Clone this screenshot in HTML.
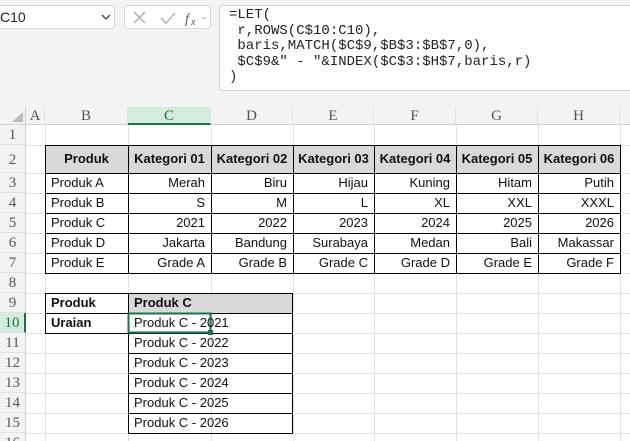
<!DOCTYPE html>
<html style="height:441px;overflow:hidden"><head><style>
*{margin:0;padding:0;box-sizing:border-box}
body{width:630px;height:441px;background:#f3f3f3;position:relative;overflow:hidden;font-family:"Liberation Sans",sans-serif}
.abs{position:absolute}
.box{position:absolute;background:#fff;border:1px solid #d6d6d6;border-radius:4px}
.mono{font-family:"Liberation Mono",monospace;font-size:14px;line-height:15.5px;color:#222}
.grid{position:absolute;left:0;top:107px;width:630px;height:334px;background:#fff}
.ch{position:absolute;top:107px;height:18px;background:#f3f3f3;border-right:1px solid #e1e1e1;border-bottom:1px solid #d0d0d0;text-align:center;font-family:"Liberation Serif",serif;font-size:15px;color:#555;line-height:18px}
.rh{position:absolute;left:0;width:26px;background:#f3f3f3;border-right:1px solid #d0d0d0;border-bottom:1px solid #e1e1e1;text-align:center;font-family:"Liberation Serif",serif;font-size:15px;color:#555}
.c{position:absolute;font-size:13px;color:#111;padding:0 6px;white-space:nowrap;overflow:visible}
.vl{position:absolute;top:125px;width:1px;height:316px;background:#e1e1e1}
.hl{position:absolute;left:26px;height:1px;width:604px;background:#e1e1e1}
</style></head><body>
<div class="box" style="left:-5px;top:5px;width:120px;height:24px"></div>
<div class="abs" style="left:0;top:9px;font-size:14px;color:#222">C10</div>
<svg class="abs" style="left:101px;top:13px" width="10" height="8"><path d="M1 2 L5 6 L9 2" fill="none" stroke="#444" stroke-width="1.3"/></svg>
<div class="box" style="left:124px;top:5px;width:87px;height:24px"></div>
<svg class="abs" style="left:132px;top:10px" width="80" height="16"><path d="M2 2 L13 13 M13 2 L2 13" stroke="#aaa" stroke-width="1.3"/><path d="M29 8 L34 13 L43 3" fill="none" stroke="#aaa" stroke-width="1.3"/><text x="53" y="13" font-family="Liberation Serif" font-style="italic" font-size="14" fill="#555">f</text><text x="59" y="15" font-family="Liberation Serif" font-style="italic" font-size="10" fill="#555">x</text><path d="M70 7 L72 9 L74 7" fill="none" stroke="#bbb"/></svg>
<div class="box" style="left:219px;top:5px;width:420px;height:86px"></div>
<div class="abs mono" style="left:229px;top:8px;white-space:pre">=LET(
 r,ROWS(C$10:C10),
 baris,MATCH($C$9,$B$3:$B$7,0),
 $C$9&amp;" - "&amp;INDEX($C$3:$H$7,baris,r)
)</div>
<div class="grid"></div>
<div class="abs" style="left:0;top:107px;width:26px;height:18px;background:#f3f3f3;border-right:1px solid #d0d0d0;border-bottom:1px solid #d0d0d0"></div>
<svg class="abs" style="left:10px;top:111px" width="14" height="12"><path d="M13 1 L13 11 L2 11Z" fill="#bbb"/></svg>
<div class="ch" style="left:26px;width:19px">A</div>
<div class="ch" style="left:45px;width:83px">B</div>
<div class="ch" style="left:128px;width:83px;background:#d3ecdd;border-bottom:2px solid #1e7145;color:#1e7145">C</div>
<div class="ch" style="left:211px;width:82px">D</div>
<div class="ch" style="left:293px;width:81px">E</div>
<div class="ch" style="left:374px;width:82px">F</div>
<div class="ch" style="left:456px;width:82px">G</div>
<div class="ch" style="left:538px;width:82px">H</div>
<div class="ch" style="left:620px;width:10px;border-right:none"></div>
<div class="vl" style="left:45px"></div><div class="vl" style="left:128px"></div><div class="vl" style="left:211px"></div><div class="vl" style="left:293px"></div><div class="vl" style="left:374px"></div><div class="vl" style="left:456px"></div><div class="vl" style="left:538px"></div><div class="vl" style="left:620px"></div>
<div class="hl" style="top:145px"></div><div class="hl" style="top:173px"></div><div class="hl" style="top:193px"></div><div class="hl" style="top:213px"></div><div class="hl" style="top:233px"></div><div class="hl" style="top:253px"></div><div class="hl" style="top:273px"></div><div class="hl" style="top:293px"></div><div class="hl" style="top:313px"></div><div class="hl" style="top:333px"></div><div class="hl" style="top:353px"></div><div class="hl" style="top:373px"></div><div class="hl" style="top:393px"></div><div class="hl" style="top:413px"></div><div class="hl" style="top:433px"></div>
<div class="rh" style="top:125px;height:20px;line-height:20px">1</div>
<div class="rh" style="top:145px;height:28px;line-height:30px">2</div>
<div class="rh" style="top:173px;height:20px;line-height:20px">3</div>
<div class="rh" style="top:193px;height:20px;line-height:20px">4</div>
<div class="rh" style="top:213px;height:20px;line-height:20px">5</div>
<div class="rh" style="top:233px;height:20px;line-height:20px">6</div>
<div class="rh" style="top:253px;height:20px;line-height:20px">7</div>
<div class="rh" style="top:273px;height:20px;line-height:20px">8</div>
<div class="rh" style="top:293px;height:20px;line-height:20px">9</div>
<div class="rh" style="top:313px;height:20px;line-height:20px;background:#d3ecdd;color:#1e7145;border-right:2px solid #1e7145">10</div>
<div class="rh" style="top:333px;height:20px;line-height:20px">11</div>
<div class="rh" style="top:353px;height:20px;line-height:20px">12</div>
<div class="rh" style="top:373px;height:20px;line-height:20px">13</div>
<div class="rh" style="top:393px;height:20px;line-height:20px">14</div>
<div class="rh" style="top:413px;height:20px;line-height:20px">15</div>
<div class="rh" style="top:433px;height:20px;line-height:20px">16</div>

<svg class="abs" style="left:0;top:0" width="630" height="441">
<rect x="45.5" y="145.5" width="575" height="28" fill="#d9d9d9"/>
<rect x="128.5" y="293.5" width="164" height="20" fill="#d9d9d9"/>
<g stroke="#000" stroke-width="1" fill="none">
<rect x="45.5" y="145.5" width="575" height="128"/>
<path d="M45.5 173.5H620.5M45.5 193.5H620.5M45.5 213.5H620.5M45.5 233.5H620.5M45.5 253.5H620.5"/>
<path d="M128.5 145.5V273.5M211.5 145.5V273.5M293.5 145.5V273.5M374.5 145.5V273.5M456.5 145.5V273.5M538.5 145.5V273.5"/>
<rect x="45.5" y="293.5" width="247" height="40"/>
<path d="M45.5 313.5H292.5M128.5 293.5V433.5M292.5 333.5V433.5M128.5 353.5H292.5M128.5 373.5H292.5M128.5 393.5H292.5M128.5 413.5H292.5M128.5 433.5H292.5"/>
</g>
<rect x="128.5" y="313.5" width="82" height="19" fill="none" stroke="#1e7145" stroke-width="2"/>
<rect x="208" y="330" width="5" height="5" fill="#1e7145"/>
</svg>

<div style="font-weight:bold">
<div class="c" style="left:45px;top:145px;width:83px;line-height:28px;text-align:center">Produk</div>
<div class="c" style="left:128px;top:145px;width:83px;line-height:28px;text-align:center;padding:0">Kategori 01</div>
<div class="c" style="left:211px;top:145px;width:82px;line-height:28px;text-align:center;padding:0">Kategori 02</div>
<div class="c" style="left:293px;top:145px;width:81px;line-height:28px;text-align:center;padding:0">Kategori 03</div>
<div class="c" style="left:374px;top:145px;width:82px;line-height:28px;text-align:center;padding:0">Kategori 04</div>
<div class="c" style="left:456px;top:145px;width:82px;line-height:28px;text-align:center;padding:0">Kategori 05</div>
<div class="c" style="left:538px;top:145px;width:82px;line-height:28px;text-align:center;padding:0">Kategori 06</div>
<div class="c" style="left:45px;top:293px;line-height:20px">Produk</div>
<div class="c" style="left:45px;top:313px;line-height:20px">Uraian</div>
<div class="c" style="left:128px;top:293px;line-height:20px">Produk C</div>
</div>
<div id="d"></div>
<script>
var rows=[["Produk A","Merah","Biru","Hijau","Kuning","Hitam","Putih"],["Produk B","S","M","L","XL","XXL","XXXL"],["Produk C","2021","2022","2023","2024","2025","2026"],["Produk D","Jakarta","Bandung","Surabaya","Medan","Bali","Makassar"],["Produk E","Grade A","Grade B","Grade C","Grade D","Grade E","Grade F"]];
var xs=[45,128,211,293,374,456,538,620],h="";
rows.forEach(function(r,i){var y=173+i*20;r.forEach(function(t,j){var w=xs[j+1]-xs[j];h+='<div class="c" style="left:'+xs[j]+'px;top:'+y+'px;width:'+w+'px;line-height:20px;text-align:'+(j?'right':'left')+'">'+t+'</div>';});});
for(var k=0;k<6;k++)h+='<div class="c" style="left:128px;top:'+(313+k*20)+'px;line-height:20px">Produk C - '+(2021+k)+'</div>';
document.getElementById("d").innerHTML=h;
</script>
</body></html>
